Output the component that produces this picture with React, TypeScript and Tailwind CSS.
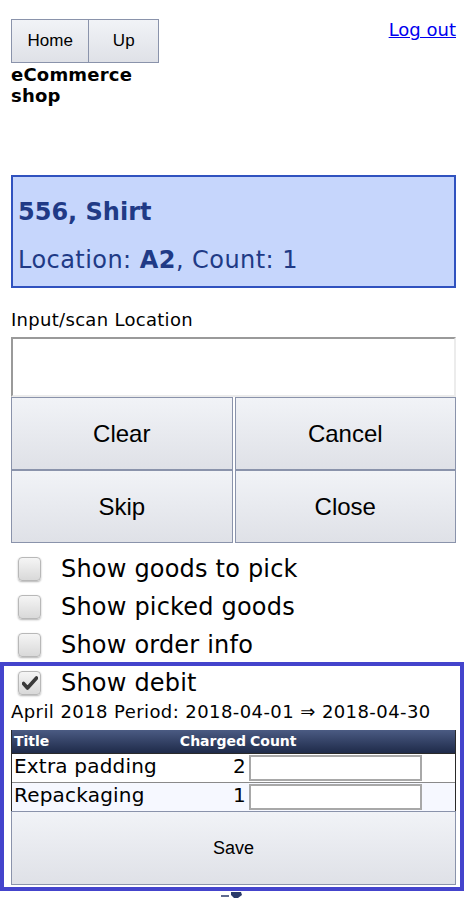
const sans = { fontFamily: '"DejaVu Sans", Verdana, sans-serif' };
const arial = { fontFamily: '"Liberation Sans", Arial, sans-serif' };

function Check({ checked }: { checked?: boolean }) {
  return (
    <span className="flex h-[24px] w-[23px] shrink-0 items-center justify-center rounded-[4px] border border-[#b8b8b8] bg-gradient-to-b from-[#f5f5f5] to-[#d9d9d9] shadow-[0_1px_2px_rgba(0,0,0,0.3)]">
      {checked && (
        <svg width="16" height="14" viewBox="0 0 16 14">
          <path d="M1.5 7.5 L5.5 12 L14.5 2" fill="none" stroke="#3a3a3a" strokeWidth="3.6" strokeLinecap="round" strokeLinejoin="round" />
        </svg>
      )}
    </span>
  );
}

function Option({ label, checked }: { label: string; checked?: boolean }) {
  return (
    <label className="flex h-[24px] items-center gap-[20px] pl-[7px] text-[24px] leading-[24px] tracking-[0.2px] text-black">
      <Check checked={checked} />
      <span>{label}</span>
    </label>
  );
}

const btn =
  "flex items-center justify-center border border-[#8a93ab] bg-gradient-to-b from-[#f1f3f7] to-[#dfe1e7] text-black";

const rows = [
  { title: "Extra padding", charged: 2 },
  { title: "Repackaging", charged: 1 },
];

export default function App() {
  return (
    <div className="min-h-[898px] bg-white pl-[11px] pr-[9px] text-black" style={sans}>
      <div className="flex items-start justify-between pt-[19px]">
        <div className="w-[148px]">
          <div className="flex text-[17px]" style={arial}>
            <button className={btn + " h-[44px] w-[79px]"}>Home</button>
            <button className={btn + " -ml-px h-[44px] w-[71px]"}>Up</button>
          </div>
          <div className="mt-px text-[18px] font-bold leading-[21px] tracking-[0.2px]">eCommerce shop</div>
        </div>
        <a href="#" className="text-[18px] leading-[21px] text-[#0000ee] underline">
          Log out
        </a>
      </div>

      <div className="mt-[69px] border-2 border-[#3052bf] bg-[#c6d6fc] px-[5px] pb-[12px] pt-[21px] text-[24px] leading-[28px] text-[#203a86]">
        <div className="font-bold">556, Shirt</div>
        <div className="mt-[20px] tracking-[0.45px]">
          Location: <b>A2</b>, Count: 1
        </div>
      </div>

      <div className="mt-[21px] text-[18px] leading-[21px] tracking-[0.3px]">Input/scan Location</div>
      <input className="mt-[7px] block h-[60px] w-full border-2 border-b-[#ececec] border-l-[#9a9a9a] border-r-[#ececec] border-t-[#9a9a9a] bg-white outline-none" />

      <div className="grid grid-cols-2 gap-x-[2px] text-[24px]" style={arial}>
        <button className={btn + " h-[73px]"}>Clear</button>
        <button className={btn + " h-[73px]"}>Cancel</button>
        <button className={btn + " h-[73px]"}>Skip</button>
        <button className={btn + " h-[73px]"}>Close</button>
      </div>

      <div className="mt-[14px] flex flex-col gap-[14px]">
        <Option label="Show goods to pick" />
        <Option label="Show picked goods" />
        <Option label="Show order info" />
      </div>

      <div className="-ml-[11px] mt-[5px] w-[464px] border-4 border-[#4444cc] pb-[2px] pl-[7px] pr-[4px] pt-[5px]">
        <Option label="Show debit" checked />
        <div className="mt-[6px] text-[18px] leading-[21px] tracking-[0.42px]">
          April 2018 Period: 2018-04-01 ⇒ 2018-04-30
        </div>

        <div className="mt-[8px] border-x border-[#2a2a2a]">
          <div className="flex h-[23px] items-start bg-gradient-to-b from-[#4b5b83] to-[#1f2b4a] pt-[3px] text-[14px] font-bold leading-[17px] text-white">
            <div className="w-[165px] pl-[2px]">Title</div>
            <div className="w-[69px] text-right">Charged</div>
            <div className="pl-[4px]">Count</div>
          </div>
          {rows.map((r, i) => (
            <div
              key={r.title}
              className={
                "flex h-[29px] items-start text-[20px] leading-[24px] tracking-[0.2px] " +
                (i === 0 ? "border-t border-[#2a2a2a] bg-white" : "border-t border-[#8a8a8a] bg-[#f6f8ff]")
              }
            >
              <div className="w-[165px] pl-[2px]">{r.title}</div>
              <div className="w-[69px] text-right">{r.charged}</div>
              <input className="ml-[3px] mt-px h-[26px] w-[173px] border-2 border-[#a8a8a8] bg-white outline-none" />
            </div>
          ))}
        </div>
        <button className={btn + " h-[74px] w-full text-[18px]"} style={arial}>
          Save
        </button>
      </div>

      <div className="mt-[1px] flex justify-center pr-[4px]">
        <svg width="22" height="14" viewBox="0 0 22 14">
          <path d="M0 4 H8" stroke="#2a3a6a" strokeWidth="1.5" />
          <path d="M10 0 H20 L21 3 L17 6 L13 6 L10 3 Z" fill="#2a3a6a" />
        </svg>
      </div>
    </div>
  );
}
